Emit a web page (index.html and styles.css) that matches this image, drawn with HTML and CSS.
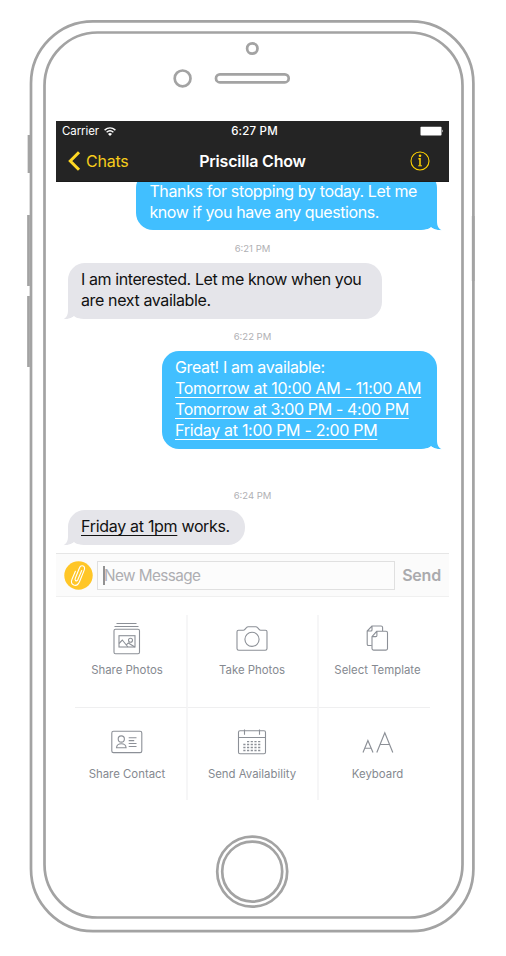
FILE: index.html
```html
<!DOCTYPE html>
<html lang="en">
<head>
<meta charset="utf-8">
<title>Chat with Priscilla Chow</title>
<link rel="stylesheet" href="styles.css">
</head>
<body>
<div class="phone">
  <svg class="shell" width="506" height="956" fill="none" stroke="#a3a3a3" stroke-width="2.7">
    <rect x="31" y="21.3" width="442.4" height="909.8" rx="62"/>
    <rect x="44.5" y="32.5" width="418" height="885" rx="53"/>
    <circle cx="252.3" cy="48.5" r="5.2"/>
    <circle cx="182.6" cy="78.4" r="7.9"/>
    <rect x="216" y="74.4" width="72.7" height="7.9" rx="3.9"/>
    <circle cx="252.2" cy="871.6" r="35" />
    <circle cx="252.2" cy="871.6" r="30" />
    <path d="M29 135v38M28.5 215v71M28.5 296v71M473.2 216v65"/>
  </svg>
  <main class="screen">
    <header class="header">
      <div class="status">
        <span class="carrier"><span>Carrier</span>
          <svg width="12" height="9" viewBox="0 0 12 9" fill="none" stroke="#fff" stroke-width="1.4"><path d="M.6 3.1Q6-1.4 11.4 3.1M2.6 5.3Q6 2.4 9.4 5.3"/><path d="M4 6.9Q6 5.2 8 6.9L6 8.9Z" fill="#fff" stroke="none"/></svg>
        </span>
        <span class="clock">6:27 PM</span>
        <svg class="battery" width="24" height="10"><rect x=".5" y=".7" width="21" height="8.8" rx=".8" fill="#fff"/><path d="M22.2 3.5q1.5 1.4 0 3z" fill="#fff"/></svg>
      </div>
      <nav class="nav">
        <span class="back"><svg width="13" height="20" viewBox="0 0 13 20" fill="none" stroke="#ffd824" stroke-width="3"><path d="M11 1.2 2.3 10 11 18.8"/></svg><span>Chats</span></span>
        <h1 class="title">Priscilla Chow</h1>
        <svg class="info" width="20" height="20" fill="none" stroke="#ffd200"><circle cx="10" cy="10" r="9" stroke-width="1.1"/><path d="M8.4 7.8H10v7" stroke-width="1.5"/><path d="M8.2 14.8h3.8" stroke-width="1"/><circle cx="10" cy="4.8" r="1.3" fill="#ffd200" stroke="none"/></svg>
      </nav>
    </header>
    <section class="chat">
      <div class="bubble sent first">Thanks for stopping by today. Let me<br><span class="tight">know if you have any questions.</span>
        <svg class="tail" width="22" height="18"><path d="M0 0H17V8C17 13 18.5 16 22 17.2Q15 17.5 11 14.3Q8 17 2.5 17H0Z"/><path class="notch" d="M1 17.1Q8 17 11 14.3Q15 17.5 22 17.2V18H1Z"/></svg></div>
      <time class="time t1">6:21 PM</time>
      <div class="bubble received second"><span class="tight">I am interested. Let me know when you</span><br>are next available.
        <svg class="tail" width="22" height="18"><path d="M0 0H17V8C17 13 18.5 16 22 17.2Q15 17.5 11 14.3Q8 17 2.5 17H0Z"/><path class="notch" d="M1 17.1Q8 17 11 14.3Q15 17.5 22 17.2V18H1Z"/></svg></div>
      <time class="time t2">6:22 PM</time>
      <div class="bubble sent third">Great! I am available:<br><u class="slot">Tomorrow at 10:00 AM - 11:00 AM</u><br><u>Tomorrow at 3:00 PM - 4:00 PM</u><br><u class="slot">Friday at 1:00 PM - 2:00 PM</u>
        <svg class="tail" width="22" height="18"><path d="M0 0H17V8C17 13 18.5 16 22 17.2Q15 17.5 11 14.3Q8 17 2.5 17H0Z"/><path class="notch" d="M1 17.1Q8 17 11 14.3Q15 17.5 22 17.2V18H1Z"/></svg></div>
      <time class="time t3">6:24 PM</time>
      <div class="bubble received fourth"><u class="slot">Friday at 1pm</u> works.
        <svg class="tail" width="22" height="18"><path d="M0 0H17V8C17 13 18.5 16 22 17.2Q15 17.5 11 14.3Q8 17 2.5 17H0Z"/><path class="notch" d="M1 17.1Q8 17 11 14.3Q15 17.5 22 17.2V18H1Z"/></svg></div>
    </section>
    <section class="composer">
      <svg class="clip" width="29" height="29" fill="none" stroke="#fff" stroke-width="1.1" stroke-linecap="round"><circle cx="14.5" cy="14.5" r="14.2" fill="#ffc627" stroke="none"/><path d="M17.7 9.5 13.9 18.5Q12.9 20.5 11.7 19.7Q10.6 19 11.3 17.3L15.2 7.5Q16.7 3.9 19.2 5Q21.4 6 20.1 9.4L15.6 20.5Q13.5 25.5 9.8 24Q6.2 22.4 8 18.2L11.4 10.2"/></svg>
      <div class="input"><i class="caret"></i><span>New Message</span></div>
      <span class="send">Send</span>
    </section>
    <section class="actions">
      <div class="action"><svg width="34" height="34" fill="none" stroke="#8c9097" stroke-width="1.1"><path d="M6.5 2.5h20M4.5 5.5h24"/><rect x="4" y="8.3" width="25.5" height="24.5" rx="1.5"/><rect x="9" y="14.7" width="16" height="11.3"/><path d="m9 22.5 3.3-3.5 5.6 7M16.3 23.8l2-1.8 6.5 4"/><circle cx="20.5" cy="19.3" r="2"/></svg><span>Share Photos</span></div>
      <div class="action"><svg width="34" height="34" fill="none" stroke="#8c9097" stroke-width="1.1"><path d="M3.5 9.2h4.8q1 0 1.6-.8l1.8-2q.5-.6 1.4-.6h7.8q.9 0 1.4.6l1.8 2q.6.8 1.6.8h4.8q1.5 0 1.5 1.5V27.5q0 1.7-1.7 1.7H3.7Q2 29.2 2 27.5V10.7q0-1.5 1.5-1.5Z"/><circle cx="17" cy="18.3" r="7.1"/></svg><span>Take Photos</span></div>
      <div class="action"><svg width="34" height="34" fill="none" stroke="#8c9097" stroke-width="1.1"><path d="M10.8 24.5H7.5q-1.3 0-1.3-1.3V10l4.7-5H20q1.6 0 1.6 1.6V10M6.2 10H10q1 0 1-1V5"/><path d="M11 15.6 15.7 10.3H25q1.5 0 1.5 1.5v15.8q0 1.5-1.5 1.5H12.5q-1.5 0-1.5-1.5ZM11 15.6h3.7q1.2 0 1.2-1.2v-4"/></svg><span>Select Template</span></div>
      <div class="action"><svg width="34" height="34" fill="none" stroke="#8c9097" stroke-width="1.1"><rect x="1.8" y="6.3" width="30" height="21.3" rx="1.7"/><circle cx="11.3" cy="14" r="3.1"/><path d="M6.5 22.7q.3-4 4.8-4t4.8 4zM18.7 12.7h7.8M18.7 15.6h5.5M18.7 18.5h7.8M18.7 21.5h7.8"/></svg><span>Share Contact</span></div>
      <div class="action"><svg width="34" height="34" fill="none" stroke="#8c9097" stroke-width="1.1"><rect x="3.5" y="5.8" width="27" height="23" rx="1.5"/><path d="M3.5 12.5h27M9.5 4.5v5.2M24.5 4.5v5.2"/><path d="M12 16.7h14.5M8.3 19.5h18.2M8.3 22.5h18.2M8.3 25.5h18.2" stroke-dasharray="2.2 1.5" stroke-width="1.3"/></svg><span>Send Availability</span></div>
      <div class="action"><svg width="34" height="34" fill="none" stroke="#8c9097" stroke-width="1.15"><path d="m2 27.5 4.9-12 5.1 12M3.9 23.2H10.2M15.8 27.5l8-19.7 8 19.7M18.9 19.5h9.8"/></svg><span>Keyboard</span></div>
    </section>
  </main>
</div>
</body>
</html>
```
FILE: styles.css
```css
* { box-sizing: border-box; }
body { margin: 0; background: #fff; font-family: Inter, "Liberation Sans", sans-serif; }
svg { display: block; flex: none; }
.phone { position: relative; width: 506px; height: 956px; padding: 121px 57px 0 56px; overflow: hidden; }
.shell { position: absolute; left: 0; top: 0; }
.screen { position: relative; width: 393px; }
.header { height: 61px; background: #242424; color: #fff; border-bottom: 1px solid #1b1b1b; position: relative; z-index: 1; }
.status { display: grid; grid-template-columns: 1fr auto 1fr; align-items: center; height: 20px; padding: 0 5px 0 6px; font-size: 11.5px; }
.carrier { display: flex; align-items: center; gap: 5px; letter-spacing: -.1px; }
.clock { font-weight: 500; letter-spacing: .2px; padding-left: 3px; }
.battery { justify-self: end; }
.nav { display: grid; grid-template-columns: 1fr auto 1fr; align-items: center; height: 40px; padding: 0 19px 0 12px; }
.back { display: flex; align-items: center; gap: 5px; color: #f6cc1b; font-size: 16px; letter-spacing: -.25px; }
.title { margin: 0 0 0 7px; font-size: 16px; line-height: 20px; font-weight: 600; letter-spacing: -.2px; white-space: nowrap; }
.info { justify-self: end; }
.chat { display: flex; flex-direction: column; height: 371px; background: #fff; }
.bubble { position: relative; isolation: isolate; height: 56px; padding: 6px 13px; border-radius: 17px; font-size: 16px; line-height: 20.8px; letter-spacing: -.37px; white-space: nowrap; flex: none; }
.bubble u { text-decoration-thickness: 1px; text-underline-offset: 3px; text-decoration-skip-ink: none; }
.tight { letter-spacing: -.41px; }
.bubble .slot { letter-spacing: -.3px; }
.sent { align-self: flex-end; margin-right: 12px; background: #41bfff; color: #fff; }
.received { align-self: flex-start; margin-left: 12px; background: #e5e5ea; color: #111; }
.tail { position: absolute; z-index: -1; bottom: -1px; fill: #41bfff; }
.sent .tail { right: -5px; }
.received .tail { left: -5px; transform: scaleX(-1); fill: #e5e5ea; }
.tail .notch { fill: #fff; }
.first { width: 301px; height: 59px; margin-top: -11px; padding-top: 10px; padding-left: 13.4px; }
.second { width: 314px; }
.third { width: 275px; height: 97.5px; padding-top: 6.4px; }
.fourth { width: 177px; height: 35px; padding-top: 6.5px; }
.time { height: 12px; font-size: 9.5px; line-height: 12px; color: #b0b0b4; text-align: center; flex: none; }
.t1 { margin: 13px 0 8px; }
.t2 { margin: 12px 0 8px; }
.t3 { margin: 41px 0 8px; }
.composer { display: flex; align-items: center; height: 44px; padding: 0 8px 0 8px; border-top: 1px solid #e6e6e6; border-bottom: 1px solid #f0f0f0; background: #fbfbfb; }
.input { display: flex; align-items: center; width: 298px; height: 29px; margin-left: 4px; padding-left: 5px; border: 1px solid #e0e0e0; background: #fcfcfc; color: #aeaeb2; font-size: 15.3px; letter-spacing: -.6px; }
.input span { letter-spacing: -.58px; }
.caret { width: 2px; height: 19px; margin-right: -1px; background: #929292; flex: none; }
.send { margin-left: auto; font-size: 16px; font-weight: 600; letter-spacing: -.2px; color: #aaaaad; }
.actions { display: grid; grid-template-columns: 113px 131px 111px; grid-template-rows: 93px 92px; margin: 18px 19px 0; }
.action { display: flex; flex-direction: column; align-items: center; padding-top: 6px; border-right: 2px solid #f6f6f7; font-size: 11.4px; line-height: 16px; color: #858990; white-space: nowrap; gap: 7px; }
.action:nth-child(3n) { border-right: 0; padding-left: 6px; }
.action:nth-child(3n+1) { padding-right: 7px; }
.action:nth-child(3n+2) { padding-right: 1px; }
.action:nth-child(-n+3) { border-bottom: 1px solid #efeff0; }
.action:nth-child(n+4) { padding-top: 17px; }
```
